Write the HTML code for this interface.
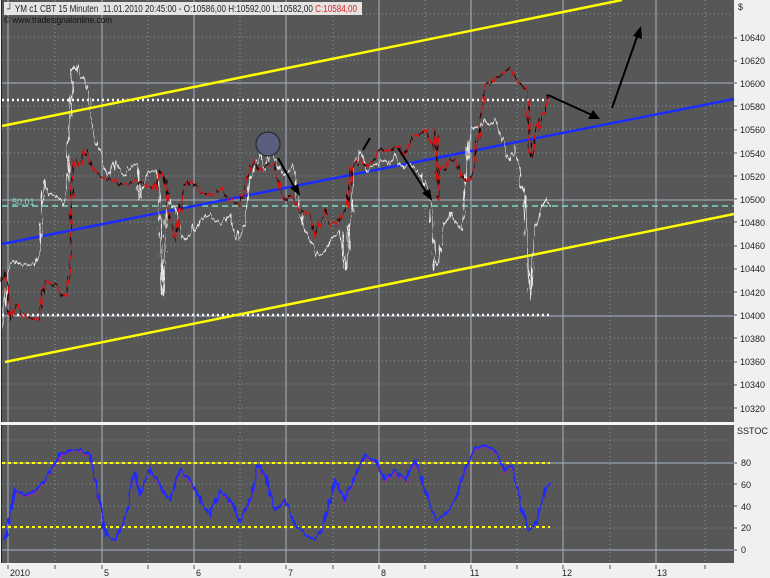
<!DOCTYPE html>
<html><head><meta charset="utf-8"><style>
html,body{margin:0;padding:0;background:#f0f0f0;width:770px;height:578px;overflow:hidden}
svg{display:block}
text{font-family:"Liberation Sans",sans-serif;font-size:9px;fill:#222}
</style></head><body>
<svg width="770" height="578" viewBox="0 0 770 578">
<defs>
<filter id="jag" x="-5%" y="-20%" width="110%" height="140%">
<feTurbulence type="fractalNoise" baseFrequency="0.35 0.05" numOctaves="2" seed="3" result="n"/>
<feDisplacementMap in="SourceGraphic" in2="n" scale="9" xChannelSelector="R" yChannelSelector="G"/>
</filter>
<filter id="jag2" x="-5%" y="-20%" width="110%" height="140%">
<feTurbulence type="fractalNoise" baseFrequency="0.3 0.08" numOctaves="2" seed="7" result="n"/>
<feDisplacementMap in="SourceGraphic" in2="n" scale="6" xChannelSelector="R" yChannelSelector="G"/>
</filter>
</defs>
<rect x="0" y="0" width="770" height="578" fill="#f0f0f0"/>
<rect x="2" y="0" width="732" height="422" fill="#575757"/>
<rect x="2" y="425" width="732" height="138" fill="#575757"/>
<line x1="1.5" y1="0" x2="1.5" y2="563" stroke="#222"/>
<g stroke="#9aa" stroke-width="1" stroke-dasharray="1,3" opacity="0.8">
<line x1="55" y1="0" x2="55" y2="563"/><line x1="148" y1="0" x2="148" y2="563"/><line x1="240" y1="0" x2="240" y2="563"/><line x1="333" y1="0" x2="333" y2="563"/><line x1="425" y1="0" x2="425" y2="563"/><line x1="517" y1="0" x2="517" y2="563"/><line x1="610" y1="0" x2="610" y2="563"/><line x1="705" y1="0" x2="705" y2="563"/>
<line x1="2" y1="14" x2="734" y2="14"/><line x1="2" y1="37" x2="734" y2="37"/><line x1="2" y1="60" x2="734" y2="60"/><line x1="2" y1="106" x2="734" y2="106"/><line x1="2" y1="129" x2="734" y2="129"/><line x1="2" y1="153" x2="734" y2="153"/><line x1="2" y1="176" x2="734" y2="176"/><line x1="2" y1="222" x2="734" y2="222"/><line x1="2" y1="245" x2="734" y2="245"/><line x1="2" y1="268" x2="734" y2="268"/><line x1="2" y1="292" x2="734" y2="292"/><line x1="2" y1="338" x2="734" y2="338"/><line x1="2" y1="361" x2="734" y2="361"/><line x1="2" y1="384" x2="734" y2="384"/><line x1="2" y1="408" x2="734" y2="408"/>
<line x1="2" y1="440" x2="734" y2="440"/><line x1="2" y1="484" x2="734" y2="484"/><line x1="2" y1="506" x2="734" y2="506"/><line x1="2" y1="528" x2="734" y2="528"/>
</g>
<g stroke="#a8b4c8" stroke-width="1">
<line x1="8" y1="0" x2="8" y2="563"/><line x1="102" y1="0" x2="102" y2="563"/><line x1="194" y1="0" x2="194" y2="563"/><line x1="286" y1="0" x2="286" y2="563"/><line x1="379" y1="0" x2="379" y2="563"/><line x1="471" y1="0" x2="471" y2="563"/><line x1="563" y1="0" x2="563" y2="563"/><line x1="656" y1="0" x2="656" y2="563"/>
<line x1="2" y1="83" x2="734" y2="83"/><line x1="2" y1="200" x2="734" y2="200"/><line x1="2" y1="316" x2="734" y2="316"/>
<line x1="2" y1="463" x2="734" y2="463"/><line x1="2" y1="550" x2="734" y2="550"/>
</g>
<rect x="0" y="422" width="734" height="3" fill="#f4f4f4"/>
<rect x="4" y="2" width="358" height="13" fill="#e4e4e4"/>
<text x="7" y="12" textLength="350" lengthAdjust="spacingAndGlyphs" style="font-size:10px">┘ YM c1 CBT 15 Minuten&#160; 11.01.2010 20:45:00 - O:10586,00 H:10592,00 L:10582,00 <tspan fill="#e02020">C:10584,00</tspan></text>
<text x="4" y="23" textLength="108" lengthAdjust="spacingAndGlyphs" style="fill:#111">© www.tradesignalonline.com</text>
<g stroke="#fff" stroke-width="2.5" stroke-dasharray="2,3">
<line x1="2" y1="100" x2="550" y2="100"/><line x1="2" y1="315" x2="550" y2="315"/>
</g>
<line x1="2" y1="206" x2="734" y2="206" stroke="#7fd8c0" stroke-width="1.5" stroke-dasharray="6,4"/>
<text x="12" y="205" style="fill:#7fd8c0">50,01</text>
<line x1="2" y1="126" x2="622" y2="0" stroke="#ffff00" stroke-width="2.5"/>
<line x1="5" y1="362" x2="734" y2="214" stroke="#ffff00" stroke-width="2.5"/>
<line x1="2" y1="244" x2="734" y2="99" stroke="#1a2cff" stroke-width="2.5"/>
<polyline filter="url(#jag)" fill="none" stroke="#e8e8e8" stroke-width="1.2" points="2,330 5,300 8,270 15,260 25,265 35,265 40,250 42,215 45,180 50,195 55,195 60,200 63,205 66,195 70,110 72,70 76,65 80,75 85,80 88,95 90,100 93,130 97,145 100,150 105,165 110,175 115,160 120,170 125,175 133,165 138,165 140,200 142,190 148,170 155,170 158,180 160,215 163,295 166,220 170,200 176,210 180,230 185,240 190,235 200,220 210,215 220,225 230,215 238,240 245,225 250,180 255,165 260,155 265,170 270,150 275,160 285,175 293,165 300,210 305,230 310,240 318,255 325,250 330,240 340,230 345,270 350,225 355,165 360,150 368,170 375,165 385,160 390,165 395,155 403,170 410,165 420,175 430,190 435,270 440,255 445,225 450,215 458,225 462,230 465,185 470,130 480,125 485,120 490,125 495,120 500,130 505,150 510,160 515,145 520,180 525,195 530,300 535,230 540,215 545,200 550,205"/>
<g filter="url(#jag)">
<polyline fill="none" stroke="#e01010" stroke-width="1.8" points="2,280 5,270 8,300 10,320 15,305 20,315 30,318 40,320 42,295 45,280 55,285 62,295 66,295 70,270 72,180 75,160 80,165 85,150 90,160 95,170 100,175 108,180 115,180 120,185 128,185 135,180 145,185 155,190 160,170 163,175 165,180 170,220 175,240 180,210 185,185 190,180 200,190 210,195 220,190 230,200 240,205 245,185 250,170 255,160 260,170 268,165 275,165 280,190 285,200 292,195 300,210 310,215 315,235 325,210 330,225 340,220 347,205 352,170 358,160 370,165 380,150 390,150 400,145 405,155 410,140 418,135 425,130 433,148 436,130 438,200 440,165 445,170 450,160 455,160 460,170 465,180 470,180 475,165 478,140 480,120 486,85 490,83 500,75 505,68 510,70 515,78 520,85 527,90 530,150 532,155 535,135 540,120 545,110 549,95"/>
<polyline fill="none" stroke="#111" stroke-width="1.5" stroke-dasharray="5,7" points="2,280 5,270 8,300 10,320 15,305 20,315 30,318 40,320 42,295 45,280 55,285 62,295 66,295 70,270 72,180 75,160 80,165 85,150 90,160 95,170 100,175 108,180 115,180 120,185 128,185 135,180 145,185 155,190 160,170 163,175 165,180 170,220 175,240 180,210 185,185 190,180 200,190 210,195 220,190 230,200 240,205 245,185 250,170 255,160 260,170 268,165 275,165 280,190 285,200 292,195 300,210 310,215 315,235 325,210 330,225 340,220 347,205 352,170 358,160 370,165 380,150 390,150 400,145 405,155 410,140 418,135 425,130 433,148 436,130 438,200 440,165 445,170 450,160 455,160 460,170 465,180 470,180 475,165 478,140 480,120 486,85 490,83 500,75 505,68 510,70 515,78 520,85 527,90 530,150 532,155 535,135 540,120 545,110 549,95"/>
</g>
<circle cx="268" cy="144" r="12" fill="#5a5f80" stroke="#222" stroke-width="1"/>
<g stroke="#000" stroke-width="2" fill="none">
<line x1="278" y1="158" x2="296" y2="190"/><line x1="398" y1="148" x2="428" y2="195"/><line x1="548" y1="95" x2="594" y2="116"/><line x1="612" y1="108" x2="638" y2="34"/><line x1="363" y1="150" x2="370" y2="138"/>
</g>
<g fill="#000">
<polygon points="300,196 290,188 298,184"/><polygon points="432,201 422,193 430,189"/><polygon points="600,119 588,119 593,110"/><polygon points="641,26 642,39 633,36"/>
</g>
<g stroke="#ffff00" stroke-width="2" stroke-dasharray="3,3">
<line x1="2" y1="463" x2="550" y2="463"/><line x1="2" y1="527" x2="550" y2="527"/>
</g>
<g filter="url(#jag2)">
<polyline fill="none" stroke="#b0209a" stroke-width="2" stroke-dasharray="3,3" points="5,538 15,492 25,497 35,492 45,482 60,457 70,452 80,452 90,457 100,502 105,535 115,540 125,520 135,472 140,495 150,472 160,487 170,500 180,472 190,482 200,500 210,515 220,492 230,502 240,520 250,502 258,467 265,477 275,510 285,502 295,525 305,535 315,540 325,520 335,482 345,502 355,477 365,457 375,462 385,482 395,472 405,482 415,462 425,490 435,520 445,515 455,500 465,472 475,450 485,447 495,452 505,472 512,467 520,500 528,530 535,525 545,492 550,484"/>
<polyline fill="none" stroke="#1a2cff" stroke-width="2" points="5,540 15,490 25,495 35,490 45,480 60,455 70,450 80,450 90,455 100,500 105,535 115,540 125,520 135,470 140,495 150,470 160,485 170,500 180,470 190,480 200,500 210,515 220,490 230,500 240,520 250,500 258,465 265,475 275,510 285,500 295,525 305,535 315,540 325,520 335,480 345,500 355,475 365,455 375,460 385,480 395,470 405,480 415,460 425,490 435,520 445,515 455,500 465,470 475,448 485,445 495,450 505,470 512,465 520,500 528,530 535,525 545,490 550,482"/>
</g>
<text x="738" y="10">$</text>
<g>
<text x="740" y="41">10640</text><text x="740" y="64">10620</text><text x="740" y="87">10600</text><text x="740" y="110">10580</text><text x="740" y="133">10560</text><text x="740" y="157">10540</text><text x="740" y="180">10520</text><text x="740" y="203">10500</text><text x="740" y="226">10480</text><text x="740" y="249">10460</text><text x="740" y="272">10440</text><text x="740" y="296">10420</text><text x="740" y="319">10400</text><text x="740" y="342">10380</text><text x="740" y="365">10360</text><text x="740" y="388">10340</text><text x="740" y="412">10320</text>
<text x="737" y="434">SSTOC</text>
<text x="741" y="466">80</text><text x="741" y="488">60</text><text x="741" y="510">40</text><text x="741" y="531">20</text><text x="741" y="553">0</text>
</g>
<g stroke="#555" stroke-width="1">
<line x1="734" y1="38" x2="737" y2="38"/><line x1="734" y1="61" x2="737" y2="61"/><line x1="734" y1="83" x2="737" y2="83"/><line x1="734" y1="106" x2="737" y2="106"/><line x1="734" y1="130" x2="737" y2="130"/><line x1="734" y1="153" x2="737" y2="153"/><line x1="734" y1="176" x2="737" y2="176"/><line x1="734" y1="199" x2="737" y2="199"/><line x1="734" y1="222" x2="737" y2="222"/><line x1="734" y1="246" x2="737" y2="246"/><line x1="734" y1="269" x2="737" y2="269"/><line x1="734" y1="292" x2="737" y2="292"/><line x1="734" y1="315" x2="737" y2="315"/><line x1="734" y1="338" x2="737" y2="338"/><line x1="734" y1="362" x2="737" y2="362"/><line x1="734" y1="385" x2="737" y2="385"/><line x1="734" y1="408" x2="737" y2="408"/>
<line x1="734" y1="463" x2="737" y2="463"/><line x1="734" y1="484" x2="737" y2="484"/><line x1="734" y1="506" x2="737" y2="506"/><line x1="734" y1="528" x2="737" y2="528"/><line x1="734" y1="550" x2="737" y2="550"/>
<line x1="8" y1="565" x2="8" y2="569"/><line x1="55" y1="565" x2="55" y2="569"/><line x1="102" y1="565" x2="102" y2="569"/><line x1="148" y1="565" x2="148" y2="569"/><line x1="194" y1="565" x2="194" y2="569"/><line x1="240" y1="565" x2="240" y2="569"/><line x1="286" y1="565" x2="286" y2="569"/><line x1="333" y1="565" x2="333" y2="569"/><line x1="379" y1="565" x2="379" y2="569"/><line x1="425" y1="565" x2="425" y2="569"/><line x1="471" y1="565" x2="471" y2="569"/><line x1="517" y1="565" x2="517" y2="569"/><line x1="563" y1="565" x2="563" y2="569"/><line x1="610" y1="565" x2="610" y2="569"/><line x1="656" y1="565" x2="656" y2="569"/><line x1="705" y1="565" x2="705" y2="569"/>
</g>
<text x="10" y="576">2010</text><text x="104" y="576">5</text><text x="196" y="576">6</text><text x="288" y="576">7</text><text x="381" y="576">8</text><text x="470" y="576">11</text><text x="562" y="576">12</text><text x="657" y="576">13</text>
</svg>
</body></html>
